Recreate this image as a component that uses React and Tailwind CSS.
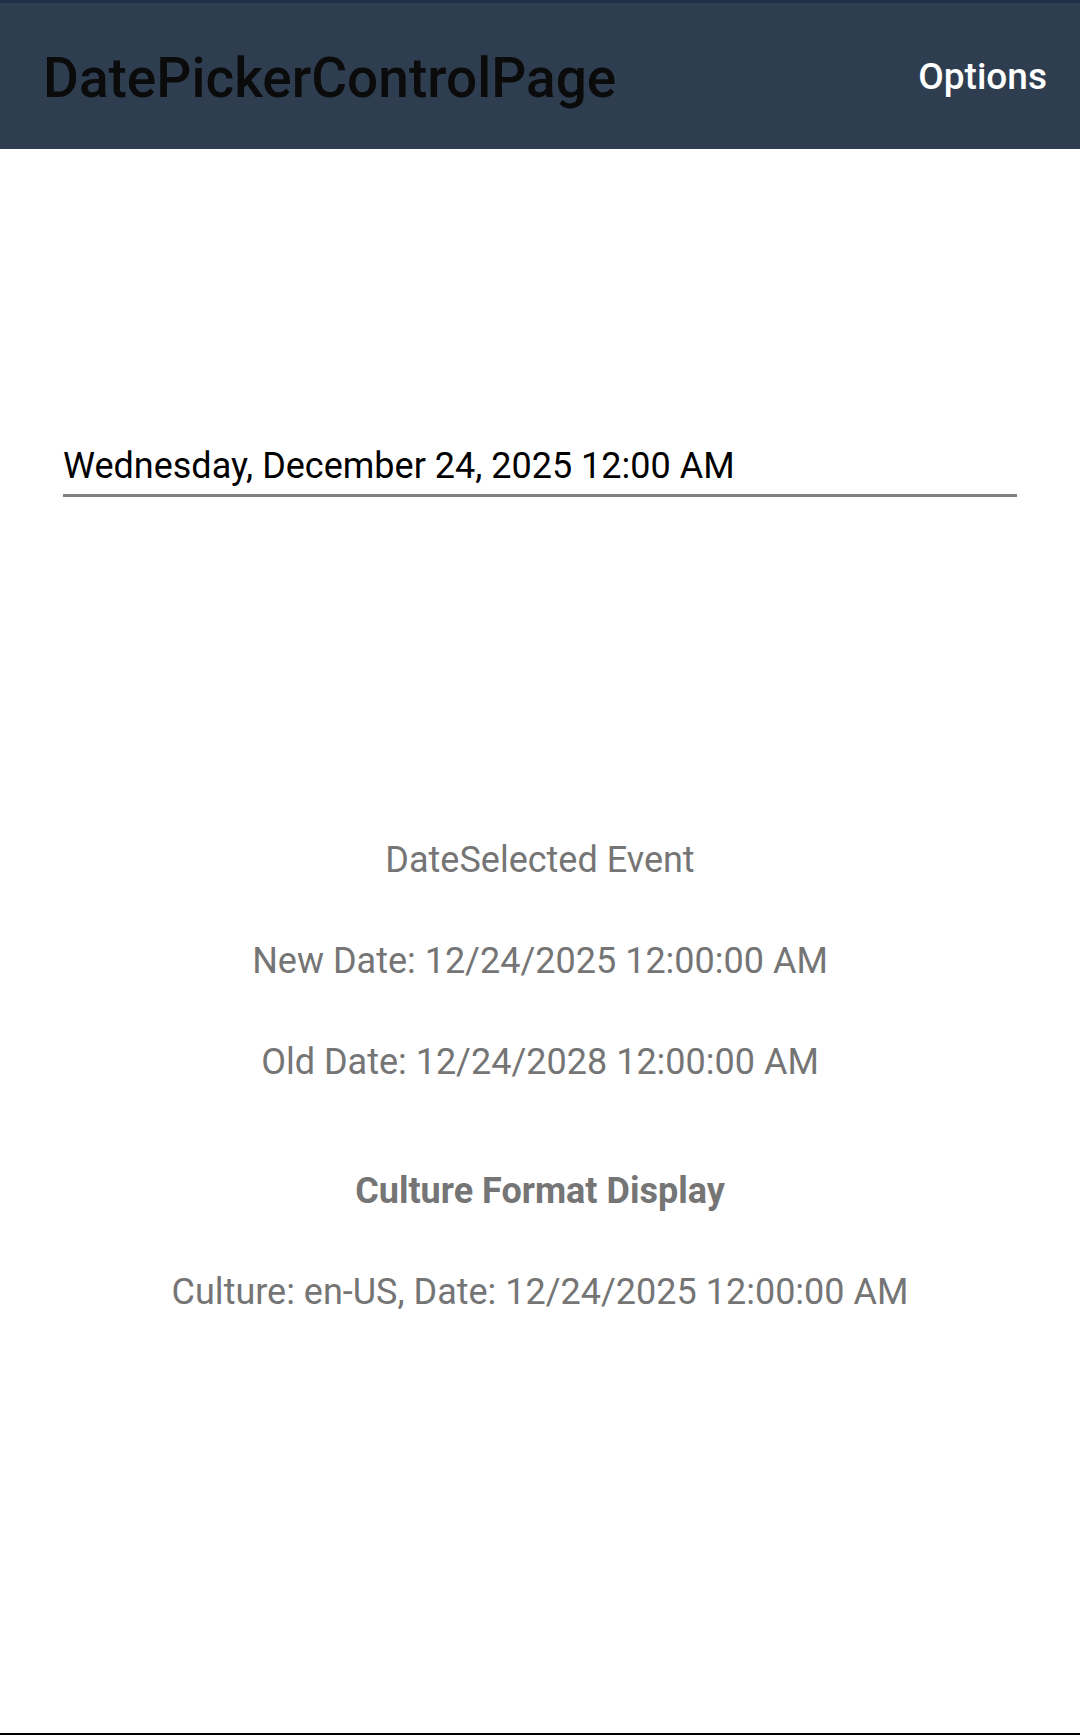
import React from 'react';

const App = () => {
  return (
    <div className="w-[1080px] h-[1735px] bg-white flex flex-col overflow-hidden" style={{ fontFamily: 'Roboto, "Noto Sans", sans-serif' }}>
      {/* Toolbar */}
      <div className="h-[3px] bg-[#1e3148]" />
      <div className="h-[146px] bg-[#2e3e50] flex items-center justify-between pl-[43px] pr-[33px] pt-[4px]">
        <h1 className="text-[55px] font-medium text-[#0b0b0b] leading-none">DatePickerControlPage</h1>
        <span className="text-[37px] font-medium text-white leading-none -mt-[4px]">Options</span>
      </div>

      {/* Date picker */}
      <div className="mt-[293px] mx-[63px] border-b-[3px] border-[#808080] pb-[4px]">
        <div className="text-[36px] text-black leading-[48px]">Wednesday, December 24, 2025 12:00 AM</div>
      </div>

      {/* Event info */}
      <div className="mt-[340px] flex flex-col items-center text-[#757575] text-[36px] leading-[46px]">
        <p>DateSelected Event</p>
        <p className="mt-[55px]">New Date: 12/24/2025 12:00:00 AM</p>
        <p className="mt-[55px]">Old Date: 12/24/2028 12:00:00 AM</p>
        <p className="mt-[83px] font-bold">Culture Format Display</p>
        <p className="mt-[55px]">Culture: en-US, Date: 12/24/2025 12:00:00 AM</p>
      </div>

      <div className="flex-1" />
      <div className="h-[2px] bg-black" />
    </div>
  );
};

export default App;
